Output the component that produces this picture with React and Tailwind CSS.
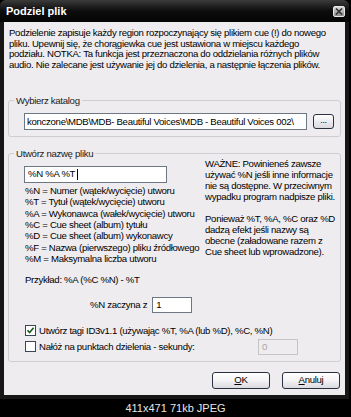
import React from "react";

const GroupBox = ({ label, className = "", children }) => (
    <fieldset className={`border border-[#cfcdd3] rounded-[3px] ${className}`}>
        <legend className="ml-[5px] px-[2px] leading-[11px] text-[#1a1a1a]">
            {label}
        </legend>
        {children}
    </fieldset>
);

const Button = ({ children }) => (
    <button className="w-[58px] h-[17px] rounded-[3px] border border-[#2c3140] bg-gradient-to-b from-white via-[#f4f4f6] to-[#d9d9e0] text-[9.6px] leading-none text-black flex items-center justify-center">
        {children}
    </button>
);

const CheckBox = ({ checked }) => (
    <span className="w-[11px] h-[11px] border border-[#3a4658] bg-white flex items-center justify-center shrink-0">
        {checked && (
            <svg width="9" height="9" viewBox="0 0 9 9">
                <path
                    d="M1.5 4.2 L3.6 6.5 L7.6 1.8"
                    fill="none"
                    stroke="#1d5f1d"
                    strokeWidth="1.7"
                />
            </svg>
        )}
    </span>
);

const codes = [
    "%N = Numer (wątek/wycięcie) utworu",
    "%T = Tytuł (wątek/wycięcie) utworu",
    "%A = Wykonawca (wałek/wycięcie) utworu",
    "%C = Cue sheet (album) tytułu",
    "%D = Cue sheet (album) wykonawcy",
    "%F = Nazwa (pierwszego) pliku źródłowego",
    "%M = Maksymalna liczba utworu",
];

export default function App() {
    return (
        <div className="w-[351px] h-[417px] bg-black flex flex-col font-['Liberation_Sans',Arial,sans-serif] text-[9.6px] tracking-[-0.3px] text-black overflow-hidden">
            <div className="w-[349px] h-[399px] shrink-0 flex flex-col rounded-t-[6px] bg-[#161616] px-[4px] pb-[4px]">
                {/* title bar */}
                <div className="h-[22px] shrink-0 flex items-center justify-between bg-gradient-to-b from-[#3c3c3c] via-[#0d0d0d] to-[#050505] -mx-[4px] px-[6px] rounded-t-[6px]">
                    <span className="text-white font-bold text-[11px] tracking-normal leading-none">
                        Podziel plik
                    </span>
                    <span className="w-[12px] h-[11px] mt-[1px] -mr-[2px] rounded-[2px] border border-[#e8e8e8] bg-gradient-to-b from-[#d8d8d8] to-[#8c8c8c] flex items-center justify-center">
                        <svg width="8" height="7" viewBox="0 0 8 7">
                            <path
                                d="M1 0.5 L7 6.5 M7 0.5 L1 6.5"
                                stroke="#333"
                                strokeWidth="1.6"
                            />
                        </svg>
                    </span>
                </div>

                {/* client area */}
                <div className="flex-1 bg-[#eeecef] flex flex-col">
                    <p className="pt-[6px] pl-[5px] leading-[10.6px] whitespace-nowrap">
                        Podzielenie zapisuje każdy region rozpoczynający się plikiem cue (!) do nowego
                        <br />
                        pliku. Upewnij się, że chorągiewka cue jest ustawiona w miejscu każdego
                        <br />
                        podziału. NOTKA: Ta funkcja jest przeznaczona do oddzielania różnych plików
                        <br />
                        audio. Nie zalecane jest używanie jej do dzielenia, a następnie łączenia plików.
                    </p>

                    <GroupBox label="Wybierz katalog" className="ml-[4px] w-[333px] mt-[25px] pt-[7px] pb-[6px]">
                        <div className="flex items-center pl-[15px] gap-[6px]">
                            <div className="w-[283px] h-[17px] border border-[#6d7884] bg-white px-[2px] flex items-center overflow-hidden whitespace-nowrap">
                                konczone\MDB\MDB- Beautiful Voices\MDB - Beautiful Voices 002\
                            </div>
                            <button className="w-[21px] h-[15px] rounded-[3px] border border-[#2c3140] bg-gradient-to-b from-white to-[#d9d9e0] text-[9px] leading-none flex items-end justify-center pb-[3px]">
                                ...
                            </button>
                        </div>
                    </GroupBox>

                    <GroupBox label="Utwórz nazwę pliku" className="ml-[4px] w-[333px] mt-[11px] pb-[6px]">
                        <div className="flex pl-[15px]">
                            <div className="w-[181px] pt-[6.5px] shrink-0">
                                <div className="w-[143px] h-[17px] border border-[#6d7884] bg-white px-[3px] flex items-center whitespace-nowrap">
                                    %N %A %T
                                    <span className="ml-[2px] w-px h-[11px] bg-black" />
                                </div>
                                <div className="mt-[2.3px] pl-px leading-[11.3px] whitespace-nowrap">
                                    {codes.map((c) => (
                                        <div key={c}>{c}</div>
                                    ))}
                                </div>
                            </div>
                            <div className="leading-[10.9px] whitespace-nowrap">
                                WAŻNE: Powinieneś zawsze
                                <br />
                                używać %N jeśli inne informacje
                                <br />
                                nie są dostępne. W przeciwnym
                                <br />
                                wypadku program nadpisze pliki.
                                <br />
                                <br />
                                Ponieważ %T, %A, %C oraz %D
                                <br />
                                dadzą efekt jeśli nazwy są
                                <br />
                                obecne (załadowane razem z
                                <br />
                                Cue sheet lub wprowadzone).
                            </div>
                        </div>

                        <div className="pl-[16px] mt-[9.5px] leading-[11px]">
                            Przykład: %A (%C %N) - %T
                        </div>

                        <div className="flex items-center mt-[12px] pl-[81px] gap-[5px]">
                            <span>%N zaczyna z</span>
                            <div className="w-[40px] h-[16px] border border-[#6d7884] bg-white px-[3px] flex items-center">
                                1
                            </div>
                        </div>

                        <div className="flex items-center mt-[12px] pl-[16px] gap-[3px]">
                            <CheckBox checked />
                            <span className="leading-[11px]">
                                Utwórz tagi ID3v1.1 (używając %T, %A (lub %D), %C, %N)
                            </span>
                        </div>

                        <div className="flex items-center mt-[3px] pl-[16px] h-[16px]">
                            <CheckBox />
                            <span className="ml-[3px] leading-[11px]">
                                Nałóż na punktach dzielenia - sekundy:
                            </span>
                            <div className="ml-auto mr-[42px] w-[40px] h-[16px] border border-[#c3c3c8] px-[3px] flex items-center text-[#a5a5aa]">
                                0
                            </div>
                        </div>
                    </GroupBox>

                    <div className="flex justify-end gap-[12px] mt-[10px] pr-[5px]">
                        <Button>
                            <span className="underline">O</span>K
                        </Button>
                        <Button>
                            <span className="underline">A</span>nuluj
                        </Button>
                    </div>
                </div>
            </div>
            <div className="flex-1 flex items-center justify-center text-[11px] tracking-normal text-[#e6e6e6]">
                411x471 71kb JPEG
            </div>
        </div>
    );
}
